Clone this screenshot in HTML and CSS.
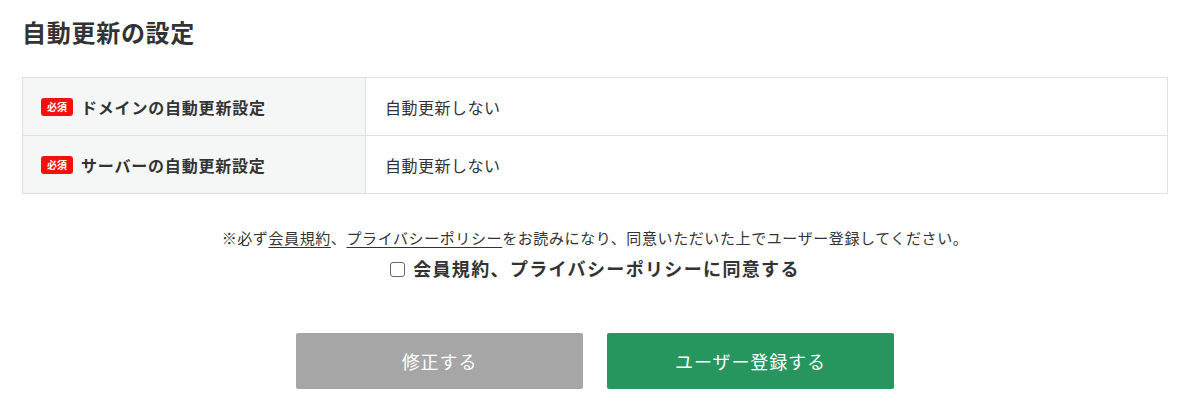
FILE: index.html
```html
<!DOCTYPE html>
<html lang="ja">
<head>
<meta charset="utf-8">
<link rel="stylesheet" href="styles.css">
</head>
<body>
<div class="page">
  <h1 class="title">自動更新の設定</h1>
  <div class="table">
    <div class="row">
      <div class="head"><span class="badge">必須</span><span class="label">ドメインの自動更新設定</span></div>
      <div class="value">自動更新しない</div>
    </div>
    <div class="row">
      <div class="head"><span class="badge">必須</span><span class="label">サーバーの自動更新設定</span></div>
      <div class="value">自動更新しない</div>
    </div>
  </div>
  <p class="note">※必ず<a class="link" href="#">会員規約</a>、<a class="link" href="#">プライバシーポリシー</a>をお読みになり、同意いただいた上でユーザー登録してください。</p>
  <label class="agree"><span class="box"></span>会員規約、プライバシーポリシーに同意する</label>
  <div class="buttons">
    <button class="btn btn-back">修正する</button>
    <button class="btn btn-submit">ユーザー登録する</button>
  </div>
</div>
</body>
</html>
```

FILE: styles.css
```css
* { box-sizing: border-box; }
html, body { margin: 0; padding: 0; background: #fff; }
body {
  font-family: "Noto Sans CJK JP", "Noto Sans", sans-serif;
  color: #333;
}
.page { padding: 0 32px 0 22px; }
.title {
  margin: 14px 0 0;
  font-size: 24px;
  line-height: 36px;
  font-weight: 700;
  letter-spacing: 0.03em;
  color: #333;
}
.table {
  margin-top: 27px;
  border: 1px solid #e0e0e0;
  border-bottom: 0;
}
.row {
  display: grid;
  grid-template-columns: 343px 1fr;
  height: 58px;
  border-bottom: 1px solid #e0e0e0;
}
.head {
  background: #f5f7f7;
  border-right: 1px solid #e0e0e0;
  display: flex;
  align-items: center;
  padding-left: 18px;
  gap: 8px;
}
.badge {
  display: inline-flex;
  align-items: center;
  justify-content: center;
  width: 32px;
  height: 18px;
  border-radius: 3px;
  background: #f50f0f;
  color: #fff;
  font-size: 10px;
  font-weight: 700;
  line-height: 1;
}
.label {
  font-size: 16px;
  font-weight: 700;
  letter-spacing: 0.05em;
}
.value {
  display: flex;
  align-items: center;
  padding-left: 19px;
  font-size: 16px;
  letter-spacing: 0.03em;
}
.note {
  margin: 32px 0 0;
  text-align: center;
  font-size: 15px;
  line-height: 24px;
  letter-spacing: 0.04em;
}
.link { color: #333; text-decoration: underline; text-underline-offset: 3px; }
.agree {
  display: flex;
  justify-content: center;
  align-items: center;
  gap: 8px;
  margin-top: 3px;
  font-size: 18px;
  font-weight: 700;
  line-height: 30px;
  letter-spacing: 0.075em;
}
.box {
  width: 15px;
  height: 15px;
  border: 1.5px solid #666;
  border-radius: 3px;
  background: #fff;
  margin-top: 2px;
}
.buttons {
  display: flex;
  justify-content: center;
  gap: 24px;
  margin-top: 50px;
}
.btn {
  width: 287px;
  height: 56px;
  border: 0;
  border-radius: 2px;
  color: #fff;
  font-family: inherit;
  font-size: 18px;
  letter-spacing: 0.05em;
}
.btn-back { background: #a6a6a6; }
.btn-submit { background: #27955e; }
```
